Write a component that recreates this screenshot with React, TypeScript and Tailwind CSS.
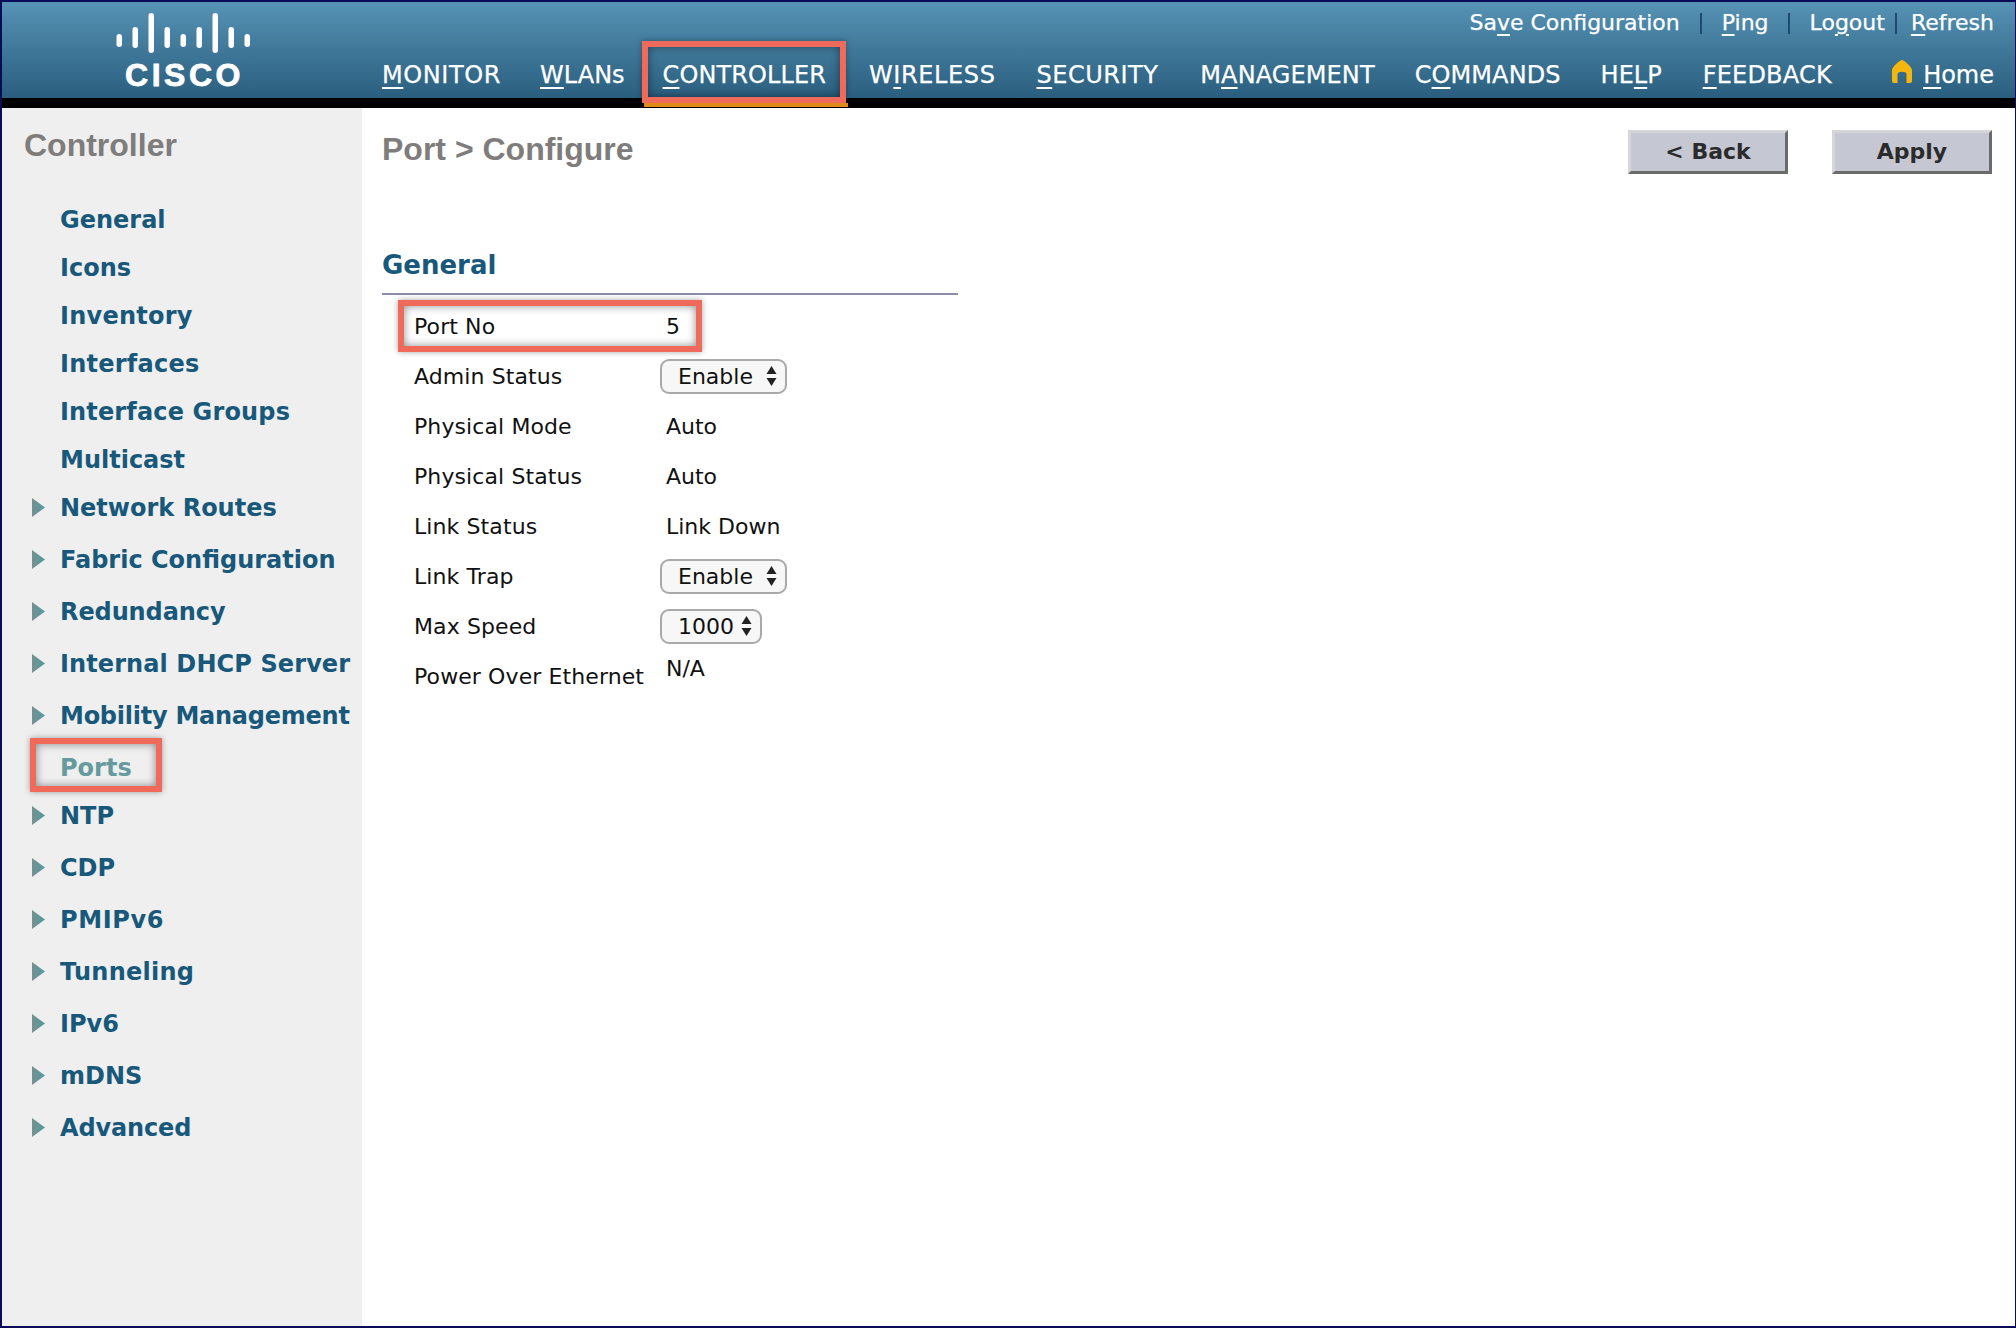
import React from "react";

function Mn({ a, u, b }: { a?: string; u: string; b?: string }) {
  return (
    <span className="whitespace-nowrap">
      {a}
      <span className="underline decoration-2 underline-offset-[4px]">{u}</span>
      {b}
    </span>
  );
}

function RedBox({ className }: { className: string }) {
  return (
    <div
      className={
        "absolute border-[6px] border-[#ef6a5b] shadow-[0_0_6px_rgba(0,0,0,0.35),inset_0_0_8px_rgba(0,0,0,0.45)] pointer-events-none " +
        className
      }
    />
  );
}

function Logo() {
  const bars: [number, number][] = [
    [21, 34],
    [14, 35],
    [0, 40],
    [14, 35],
    [21, 34],
    [14, 35],
    [0, 40],
    [14, 35],
    [21, 34],
  ];
  return (
    <div className="flex flex-col items-center w-[134px]">
      <svg width="134" height="42" viewBox="0 0 134 42">
        {bars.map(([t, b], i) => (
          <rect key={i} x={0.5 + i * 16} y={t} width="5.5" height={b - t} rx="2.7" fill="#fff" />
        ))}
      </svg>
      <div className="font-['Liberation_Sans',sans-serif] font-bold text-white text-[32px] leading-[30px] tracking-[3.5px] [-webkit-text-stroke:0.8px_white] mt-[5px] pl-[3px]">
        CISCO
      </div>
    </div>
  );
}

function Arrow() {
  return (
    <svg width="13" height="19" viewBox="0 0 13 19" className="shrink-0 mb-[1px]">
      <defs>
        <linearGradient id="arrowGrad" x1="0" y1="0" x2="1" y2="0">
          <stop offset="0" stopColor="#78908f" />
          <stop offset="1" stopColor="#4f9aa0" />
        </linearGradient>
      </defs>
      <polygon points="0,0 13,9.5 0,19" fill="url(#arrowGrad)" />
    </svg>
  );
}

const sideItems: { t: string; arrow?: boolean; gap?: boolean; ports?: boolean; tr?: string }[] = [
  { t: "General" },
  { t: "Icons" },
  { t: "Inventory", tr: "tracking-[0.25px]" },
  { t: "Interfaces", tr: "tracking-[0.25px]" },
  { t: "Interface Groups", tr: "tracking-[0.15px]" },
  { t: "Multicast" },
  { t: "Network Routes", arrow: true },
  { t: "Fabric Configuration", arrow: true, gap: true },
  { t: "Redundancy", arrow: true, gap: true, tr: "tracking-[-0.1px]" },
  { t: "Internal DHCP Server", arrow: true, gap: true, tr: "tracking-[0.1px]" },
  { t: "Mobility Management", arrow: true, gap: true, tr: "tracking-[-0.25px]" },
  { t: "Ports", gap: true, ports: true },
  { t: "NTP", arrow: true },
  { t: "CDP", arrow: true, gap: true },
  { t: "PMIPv6", arrow: true, gap: true, tr: "tracking-[0.6px]" },
  { t: "Tunneling", arrow: true, gap: true, tr: "tracking-[0.25px]" },
  { t: "IPv6", arrow: true, gap: true },
  { t: "mDNS", arrow: true, gap: true },
  { t: "Advanced", arrow: true, gap: true, tr: "tracking-[-0.15px]" },
];

function Sidebar() {
  return (
    <aside className="w-[360px] shrink-0 bg-[#efefef] pl-[22px]">
      <h2 className="font-['Liberation_Sans',sans-serif] font-bold text-[32px] leading-[40px] text-[#7f7c7c] mt-[17px]">
        Controller
      </h2>
      <ul className="mt-[31px]">
        {sideItems.map((it) => (
          <li
            key={it.t}
            className={
              "relative h-[48px] flex items-center font-['DejaVu_Sans',sans-serif] font-bold text-[24px] whitespace-nowrap " +
              (it.gap ? "mt-[4px] " : "") +
              (it.ports ? "text-[#659b9e]" : "text-[#18587a]")
            }
          >
            <span className="w-[36px] pl-[8px] flex items-center">{it.arrow && <Arrow />}</span>
            <span className={it.tr ?? ""}>{it.t}</span>
            {it.ports && <RedBox className="left-[6px] top-[-6px] w-[132px] h-[54px]" />}
          </li>
        ))}
      </ul>
    </aside>
  );
}

function TopLinks() {
  const Sep = ({ m }: { m: string }) => <span className={"w-[2px] h-[21px] bg-[#1d4a70] " + m} />;
  return (
    <div className="flex items-center justify-end text-[22px] leading-[26px] text-white [-webkit-text-stroke:0.25px_white] pr-[21px] pt-[8px]">
      <Mn a="Sa" u="v" b="e Configuration" />
      <Sep m="ml-[20px] mr-[20px]" />
      <Mn u="P" b="ing" />
      <Sep m="ml-[19px] mr-[20px]" />
      <Mn a="Lo" u="g" b="out" />
      <Sep m="ml-[10px] mr-[14px]" />
      <Mn u="R" b="efresh" />
    </div>
  );
}

function MainNav() {
  return (
    <div className="flex items-center text-[24px] leading-[28px] text-white [-webkit-text-stroke:0.25px_white] ml-[380px] mt-[24px] pr-[21px]">
      <span className="tracking-[0.6px]">
        <Mn u="M" b="ONITOR" />
      </span>
      <span className="ml-[39px]">
        <Mn u="W" b="LANs" />
      </span>
      <span className="relative ml-[38px] tracking-[0.1px]">
        <Mn u="C" b="ONTROLLER" />
        <RedBox className="left-[-21px] top-[-20px] w-[204px] h-[62px]" />
        <span className="absolute left-[-19px] top-[42px] w-[204px] h-[4px] bg-[#e08a1a]" />
      </span>
      <span className="ml-[43px] tracking-[0.6px]">
        <Mn a="W" u="I" b="RELESS" />
      </span>
      <span className="ml-[41px] tracking-[0.5px]">
        <Mn u="S" b="ECURITY" />
      </span>
      <span className="ml-[42px] tracking-[0.1px]">
        <Mn a="M" u="A" b="NAGEMENT" />
      </span>
      <span className="ml-[40px] tracking-[0.1px]">
        <Mn a="C" u="O" b="MMANDS" />
      </span>
      <span className="ml-[40px]">
        <Mn a="HE" u="L" b="P" />
      </span>
      <span className="ml-[41px] tracking-[0.2px]">
        <Mn u="F" b="EEDBACK" />
      </span>
      <span className="ml-auto flex items-center">
        <svg width="20" height="23" viewBox="0 0 20 23" className="mr-[11px] mb-[6px]">
          <path
            d="M10 0 C12 0 20 7 20 10 V21 Q20 23 18 23 H14.5 V14 C14.5 11 5.5 11 5.5 14 V23 H2 Q0 23 0 21 V10 C0 7 8 0 10 0 Z"
            fill="#f5b70f"
            stroke="#f5b70f"
            strokeWidth="0"
          />
        </svg>
        <Mn u="H" b="ome" />
      </span>
    </div>
  );
}

function Bevel({ label }: { label: string }) {
  return (
    <button className="w-[160px] h-[44px] bg-[#c5c7d3] border-[3px] border-t-[#d6d6d8] border-l-[#d6d6d8] border-b-[#6b6b6b] border-r-[#6b6b6b] font-['DejaVu_Sans',sans-serif] font-bold text-[22px] leading-none text-[#2b2b2b]">
      {label}
    </button>
  );
}

function Select({ label, w }: { label: string; w: string }) {
  return (
    <div
      className={
        "h-[35px] flex items-center justify-between rounded-[9px] border-2 border-[#a9a9a9] bg-[#f7f7f7] pl-[16px] pr-[8px] text-[22px] " +
        w
      }
    >
      <span>{label}</span>
      <svg width="11" height="22" viewBox="0 0 11 22">
        <polygon points="5.5,1 10.5,9 0.5,9" fill="#222" />
        <polygon points="0.5,13 10.5,13 5.5,21" fill="#222" />
      </svg>
    </div>
  );
}

const rows: { l: string; v: React.ReactNode; box?: boolean; na?: boolean }[] = [
  { l: "Port No", v: "5", box: true },
  { l: "Admin Status", v: <Select label="Enable" w="w-[127px]" /> },
  { l: "Physical Mode", v: "Auto" },
  { l: "Physical Status", v: "Auto" },
  { l: "Link Status", v: "Link Down" },
  { l: "Link Trap", v: <Select label="Enable" w="w-[127px]" /> },
  { l: "Max Speed", v: <Select label="1000" w="w-[102px]" /> },
  { l: "Power Over Ethernet", v: "N/A", na: true },
];

function Content() {
  return (
    <main className="flex-1 bg-white pl-[20px] pr-[23px]">
      <div className="flex items-start justify-between pt-[22px]">
        <h1 className="font-['Liberation_Sans',sans-serif] font-bold text-[32px] leading-[40px] text-[#7f7c7c] mt-[-1px]">
          Port &gt; Configure
        </h1>
        <div className="flex gap-[44px]">
          <Bevel label="< Back" />
          <Bevel label="Apply" />
        </div>
      </div>
      <div className="w-[576px] mt-[75px]">
        <h3 className="font-['DejaVu_Sans',sans-serif] font-bold text-[26px] leading-[32px] text-[#18587a]">General</h3>
        <div className="h-[2px] bg-[#8a8ca8] mt-[12px]" />
        <div className="mt-[6px]">
          {rows.map((r) => (
            <div key={r.l} className="relative h-[50px] flex items-center text-[22px] text-[#111] pl-[32px] tracking-[0.1px]">
              <span className="w-[246px] whitespace-nowrap">{r.l}</span>
              <span className={"tracking-normal " + (r.na ? "mb-[16px] ml-[6px]" : typeof r.v === "string" ? "ml-[6px]" : "")}>{r.v}</span>
              {r.box && <RedBox className="left-[16px] top-[-1px] w-[304px] h-[52px]" />}
            </div>
          ))}
        </div>
      </div>
    </main>
  );
}

export default function App() {
  return (
    <div className="w-[2016px] h-[1328px] border-2 border-[#0b0b58] border-r-[1px] flex flex-col overflow-hidden font-['DejaVu_Sans',sans-serif]">
      <header className="h-[96px] shrink-0 bg-gradient-to-b from-[#5693b5] to-[#2a5e7e] relative flex">
        <div className="absolute left-[114px] top-[11px]">
          <Logo />
        </div>
        <div className="flex-1">
          <TopLinks />
          <MainNav />
        </div>
      </header>
      <div className="h-[10px] shrink-0 bg-black" />
      <div className="flex flex-1 min-h-0">
        <Sidebar />
        <Content />
      </div>
    </div>
  );
}
